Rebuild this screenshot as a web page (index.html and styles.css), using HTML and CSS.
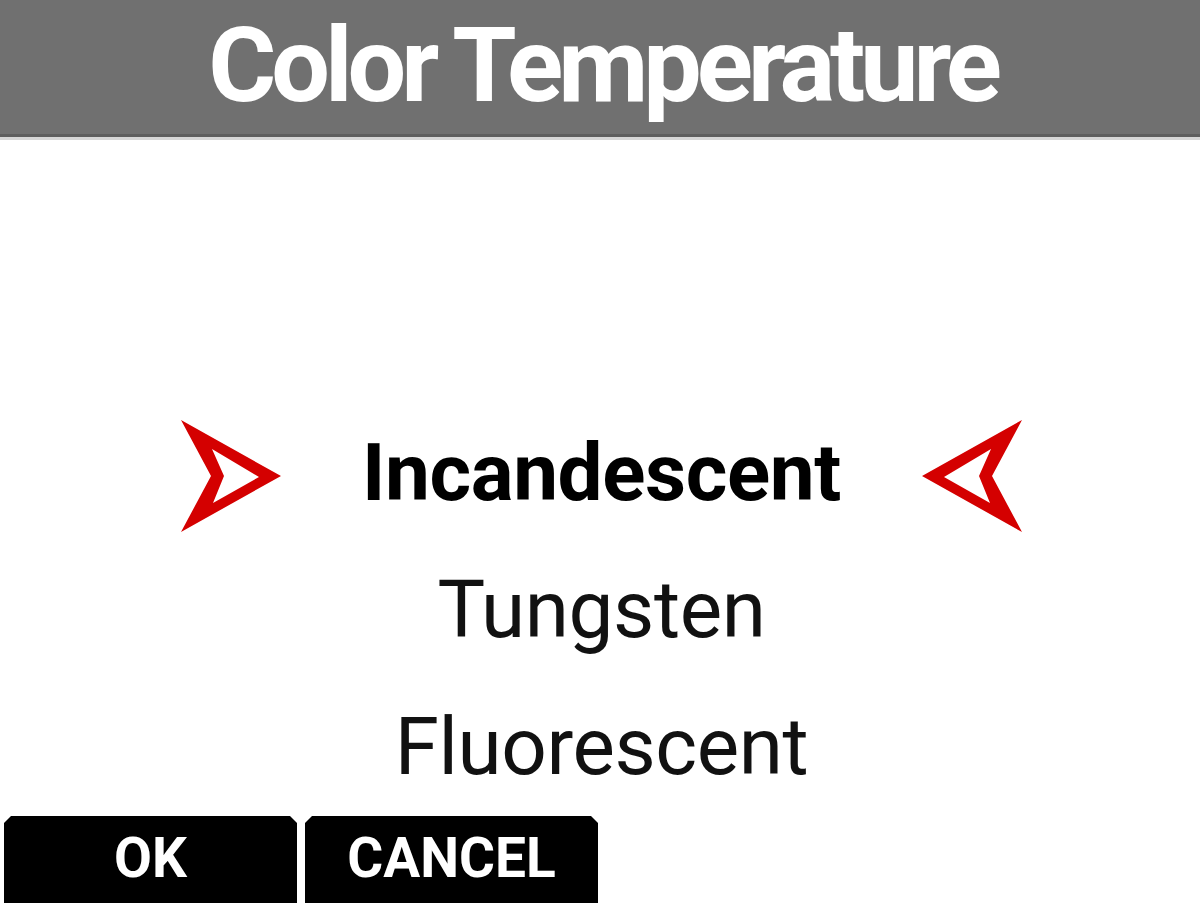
FILE: index.html
```html
<!DOCTYPE html>
<html>
<head>
<meta charset="utf-8">
<link rel="stylesheet" href="styles.css">
</head>
<body>
<div class="screen">
  <header class="title-bar">Color Temperature</header>
  <main class="options">
    <div class="option selected">
      <svg class="arrow" viewBox="0 0 100 112" width="100" height="112">
        <path fill-rule="evenodd" d="M0,0 L100,56 L0,112 L30,56 Z M31,29 L78,57 L32,83 L43,56 Z"/>
      </svg>
      <span class="label">Incandescent</span>
      <svg class="arrow" viewBox="0 0 100 112" width="100" height="112">
        <path fill-rule="evenodd" d="M100,0 L0,56 L100,112 L70,56 Z M69,29 L22,57 L68,83 L57,56 Z"/>
      </svg>
    </div>
    <div class="option"><span class="label">Tungsten</span></div>
    <div class="option"><span class="label">Fluorescent</span></div>
  </main>
  <footer class="buttons">
    <div class="btn">OK</div>
    <div class="btn">CANCEL</div>
  </footer>
</div>
</body>
</html>
```
FILE: styles.css
```css
* { box-sizing: border-box; }
html, body { margin: 0; padding: 0; background: #fff; }
body { font-family: Roboto, "Liberation Sans", sans-serif; }
.screen {
  width: 1200px;
  height: 903px;
  display: flex;
  flex-direction: column;
  overflow: hidden;
}
.title-bar {
  height: 137px;
  background: #707070;
  color: #fff;
  font-weight: 700;
  font-size: 104px;
  letter-spacing: -5px;
  line-height: 131px;
  text-align: center;
  border-bottom: 3px solid #5e5e5e;
  box-shadow: 0 3px 0 #d6d6d6;
  padding: 0 0 3px 5px;
  flex: none;
}
.options {
  flex: 1;
  display: flex;
  flex-direction: column;
  justify-content: flex-end;
}
.option {
  display: grid;
  grid-template-columns: 100px 1fr 100px;
  align-items: center;
  padding: 0 178px 0 181px;
  height: 137px;
  font-size: 80px;
  letter-spacing: -0.4px;
  line-height: 137px;
  color: #111;
}
.option .label { grid-column: 2; text-align: center; }
.option.selected { font-weight: 700; color: #000; }
.option.selected .label { grid-column: auto; }
.arrow { display: block; fill: #d40000; margin-top: 4px; }
.buttons {
  flex: none;
  height: 87px;
  display: flex;
  gap: 8px;
  padding-left: 4px;
}
.btn {
  width: 293px;
  height: 87px;
  background: #000;
  color: #fff;
  font-weight: 700;
  font-size: 55px;
  line-height: 64px;
  padding-top: 10px;
  text-align: center;
  clip-path: polygon(7px 0, calc(100% - 7px) 0, 100% 7px, 100% 100%, 0 100%, 0 7px);
}
```
